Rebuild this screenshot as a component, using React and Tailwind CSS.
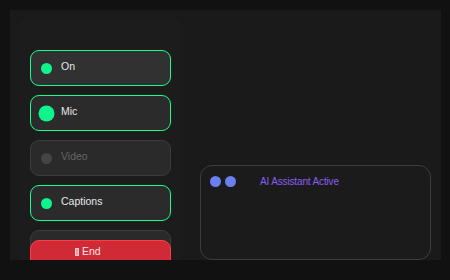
import React from 'react';

const controls = [
  { label: 'On', active: true, bg: 'bg-[#313131]' },
  { label: 'Mic', active: true, big: true, bg: 'bg-[#2b2b2b]' },
  { label: 'Video', active: false, bg: 'bg-[#2a2a2a]' },
  { label: 'Captions', active: true, bg: 'bg-[#2b2b2b]' },
];

function ControlButton({ label, active, big, bg }) {
  return (
    <button
      className={`w-[141px] h-[36px] shrink-0 rounded-[9px] border flex items-center pl-[10px] gap-[9px] ${bg} ${
        active ? 'border-[#19ff8c]' : 'border-[#3c3c3c]'
      }`}
    >
      <span
        className={`w-[11px] h-[11px] rounded-full ${active ? 'bg-[#0ff58c]' : 'bg-[#454545]'} ${
          big ? 'scale-[1.45]' : ''
        }`}
      />
      <span className={`text-[10.5px] leading-[13px] pb-[3px] ${active ? 'text-[#e6e6e6]' : 'text-[#666666]'}`}>
        {label}
      </span>
    </button>
  );
}

export default function App() {
  return (
    <div
      className="w-[450px] h-[280px] bg-[#111111] overflow-hidden pt-[10px] pl-[10px]"
      style={{ fontFamily: '"Liberation Sans", Arial, sans-serif' }}
    >
      <div className="w-[431px] h-[250px] bg-[#1a1a1a] flex pt-[10px] pl-[10px]">
        {/* Sidebar */}
        <div className="w-[160px] h-[240px] bg-[#1c1c1c] overflow-hidden pt-[30px] pl-[10px] flex flex-col gap-[9px]">
          {controls.map((c) => (
            <ControlButton key={c.label} {...c} />
          ))}
          <div className="w-[141px] h-[36px] shrink-0 rounded-[9px] border border-[#3c3c3c] bg-[#2a2a2a]" />
          <button className="relative -mt-[35px] w-[141px] h-[36px] shrink-0 rounded-[9px] border border-[#ff3d45] bg-[#d12a37] flex items-start pt-[4px] pl-[44px] gap-[3px] text-[10.5px] leading-[13px] text-[#f3e8e8]">
            <span className="mt-[3px] w-[4px] h-[8px] border border-[#f3c8c8] bg-[#e8a0a0]" />
            <span>End</span>
          </button>
        </div>

        {/* Main area */}
        <div className="flex-1 pl-[20px] pt-[145px]">
          <div className="w-[231px] h-[95px] rounded-[12px] border border-[#3d3d3d] bg-[#1b1b1b] pt-[10px] pl-[9px] flex items-start">
            <div className="flex gap-[4px]">
              <span className="w-[11px] h-[11px] rounded-full bg-[#6b80ee]" />
              <span className="w-[11px] h-[11px] rounded-full bg-[#6b80ee]" />
            </div>
            <span className="ml-[24px] -mt-[1px] text-[10px] leading-[13px] tracking-[-0.15px] text-[#8d5cf3]">
              AI Assistant Active
            </span>
          </div>
        </div>
      </div>
    </div>
  );
}
